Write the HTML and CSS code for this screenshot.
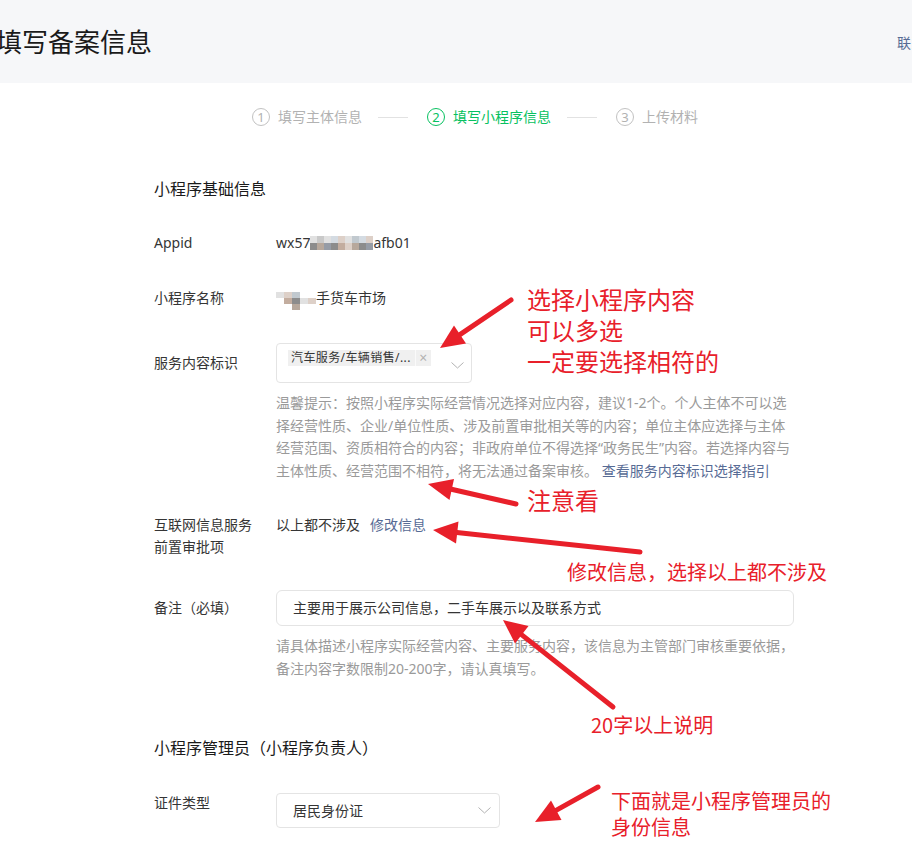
FILE: index.html
```html
<!DOCTYPE html>
<html lang="zh-CN">
  <head>
    <meta charset="UTF-8" />
    <title>填写备案信息</title>
    <link rel="stylesheet" href="styles.css">
  </head>
  <body>
    <div class="page">
      <header class="top">
        <h1 class="top-title">填写备案信息</h1>
        <a class="top-link">联系我们</a>
      </header>

      <div class="steps">
        <div class="step"><span class="step-num">1</span><span>填写主体信息</span></div>
        <span class="step-line"></span>
        <div class="step step-active"><span class="step-num">2</span><span>填写小程序信息</span></div>
        <span class="step-line"></span>
        <div class="step"><span class="step-num">3</span><span>上传材料</span></div>
      </div>

      <div class="form">
        <h2 class="section-title">小程序基础信息</h2>

        <div class="row row-appid">
          <div class="label">Appid</div>
          <div class="value">wx57<span class="mosaic mosaic-id">
            <i class="c1"></i><i class="c2"></i><i class="c1"></i><i class="c4"></i><i class="c5"></i><i class="c1"></i><i class="c6"></i><i class="c4"></i><i class="c5"></i>
            <i class="c3"></i><i class="c7"></i><i class="c8"></i><i class="c3"></i><i class="c9"></i><i class="c5"></i><i class="c7"></i><i class="c3"></i><i class="c8"></i>
          </span>afb01</div>
        </div>

        <div class="row row-name">
          <div class="label">小程序名称</div>
          <div class="value"><span class="mosaic mosaic-name">
            <i class="c1"></i><i class="c5"></i><i class="c6"></i><i class="c0"></i><i class="c0"></i>
            <i class="c0"></i><i class="c9"></i><i class="c3"></i><i class="c1"></i><i class="c5"></i>
            <i class="c0"></i><i class="c0"></i><i class="c7"></i><i class="c0"></i><i class="c0"></i>
          </span>手货车市场</div>
        </div>

        <div class="row row-center row-service">
          <div class="label">服务内容标识</div>
          <div class="multi-select">
            <span class="tag"><span class="tag-text">汽车服务/车辆销售/...</span><span class="tag-close">×</span></span>
            <svg class="chevron chevron-tag" width="13" height="7" viewBox="0 0 13 7"><polyline points="0.5,0.5 6.5,6 12.5,0.5" fill="none" stroke="#b2b2b2" stroke-width="1"/></svg>
          </div>
        </div>

        <p class="hint hint-service">温馨提示：按照小程序实际经营情况选择对应内容，建议1-2个。个人主体不可以选<br>择经营性质、企业/单位性质、涉及前置审批相关等的内容；单位主体应选择与主体<br>经营范围、资质相符合的内容；非政府单位不得选择“政务民生”内容。若选择内容与<br>主体性质、经营范围不相符，将无法通过备案审核。 <a class="link">查看服务内容标识选择指引</a></p>

        <div class="row row-icp">
          <div class="label">互联网信息服务前置审批项</div>
          <div class="value">以上都不涉及<a class="link link-edit">修改信息</a></div>
        </div>

        <div class="row row-center row-remark">
          <div class="label">备注（必填）</div>
          <div class="text-input">主要用于展示公司信息，二手车展示以及联系方式</div>
        </div>

        <p class="hint hint-remark">请具体描述小程序实际经营内容、主要服务内容，该信息为主管部门审核重要依据，<br>备注内容字数限制20-200字，请认真填写。</p>

        <h2 class="section-title section-admin">小程序管理员（小程序负责人）</h2>

        <div class="row row-idtype">
          <div class="label">证件类型</div>
          <div class="select">
            <span>居民身份证</span>
            <svg class="chevron" width="13" height="7" viewBox="0 0 13 7"><polyline points="0.5,0.5 6.5,6 12.5,0.5" fill="none" stroke="#b2b2b2" stroke-width="1"/></svg>
          </div>
        </div>
      </div>

      <!-- annotations drawn on top of the screenshot -->
      <div class="note note-select">选择小程序内容<br>可以多选<br>一定要选择相符的</div>
      <div class="note note-look">注意看</div>
      <div class="note note-small note-edit">修改信息，选择以上都不涉及</div>
      <div class="note note-small note-remark">20字以上说明</div>
      <div class="note note-small note-admin">下面就是小程序管理员的<br>身份信息</div>

      <svg class="arrows" width="912" height="842" viewBox="0 0 912 842">
        <g stroke="#e8202a" stroke-width="5" stroke-linecap="round" fill="none">
          <line x1="511" y1="300" x2="459.9" y2="334.6"/>
          <line x1="516" y1="504" x2="451.4" y2="489.3"/>
          <line x1="640" y1="552" x2="456.9" y2="532.5"/>
          <line x1="613" y1="707" x2="521.8" y2="634.9"/>
          <line x1="598" y1="787" x2="556" y2="810.4"/>
        </g>
        <g fill="#e8202a">
          <polygon points="440,348 466,343.5 454,325.5"/>
          <polygon points="428,484 454,479 449.5,500"/>
          <polygon points="433,530 458.5,521.5 456,543.5"/>
          <polygon points="503,620 528.5,626 515,643.5"/>
          <polygon points="535,822 561.5,820 551,800.5"/>
        </g>
      </svg>
    </div>
  </body>
</html>
```

FILE: styles.css
```css
body {
  margin: 0;
  font-family: "Noto Sans", "Noto Sans CJK SC", sans-serif;
  color: #353535;
  background-color: white;
  overflow: hidden;
}

.page {
  position: relative;
  width: 912px;
  height: 842px;
  overflow: hidden;
}

/* header */

.top {
  height: 83px;
  display: flex;
  align-items: center;
  justify-content: space-between;
  background-color: #f6f7f9;
}

.top-title {
  margin: 0 0 0 -4px;
  font-size: 26px;
  font-weight: normal;
  line-height: 34px;
  color: #1a1a1a;
}

.top-link {
  margin-right: -41px;
  font-size: 14px;
  color: #576b95;
}

/* steps */

.steps {
  display: flex;
  align-items: center;
  height: 20px;
  margin-top: 24px;
  padding-left: 252px;
  font-size: 14px;
  color: #b2b2b2;
}

.step {
  display: flex;
  align-items: center;
  line-height: 20px;
}

.step-num {
  width: 16px;
  height: 16px;
  margin-right: 8px;
  border: 1px solid #c2c2c2;
  border-radius: 50%;
  font-size: 13px;
  line-height: 16px;
  text-align: center;
}

.step-active {
  color: #07c160;
}

.step-active .step-num {
  border-color: #07c160;
}

.step-line {
  width: 30px;
  height: 1px;
  margin: 0 19px 0 16px;
  background-color: #e2e2e2;
}

/* form */

.form {
  padding-left: 154px;
  font-size: 14px;
}

.section-title {
  margin: 50px 0 0 0;
  font-size: 16px;
  font-weight: normal;
  line-height: 24px;
  color: #1a1a1a;
}

.section-admin {
  margin-top: 56px;
}

.row {
  display: flex;
  align-items: flex-start;
  line-height: 22px;
}

.row-center {
  align-items: center;
}

.label {
  width: 105px;
  padding-right: 17px;
  flex-shrink: 0;
}

.value {
  display: flex;
  align-items: center;
  height: 22px;
}

.row-icp .value {
  height: auto;
}

.row-appid {
  margin-top: 31px;
}

.row-name {
  margin-top: 33px;
}

.row-service {
  margin-top: 34px;
}

.row-icp {
  margin-top: 32px;
}

.row-remark {
  margin-top: 32px;
}

.row-idtype {
  margin-top: 32px;
}

.mosaic {
  display: inline-grid;
  grid-template-columns: repeat(9, 7px);
  grid-auto-rows: 7px;
}

.mosaic-name {
  grid-template-columns: repeat(5, 8px);
  grid-auto-rows: 6px;
  margin-top: 5px;
}

.mosaic i {
  display: block;
}

.c0 { background-color: transparent; }
.c1 { background-color: #e1e1e1; }
.c2 { background-color: #c9c9c9; }
.c3 { background-color: #8c8c8c; }
.c4 { background-color: #d4dbe2; }
.c5 { background-color: #ddd0c8; }
.c6 { background-color: #c1c9cf; }
.c7 { background-color: #b7a89c; }
.c8 { background-color: #969ca6; }
.c9 { background-color: #c3ad9f; }

.multi-select {
  width: 176px;
  height: 32px;
  display: flex;
  justify-content: space-between;
  align-items: flex-start;
  padding: 6px 7px 0 11px;
  border: 1px solid #e4e4e4;
  border-radius: 4px;
}

.tag {
  display: flex;
  height: 16px;
  background-color: #f0f0f0;
  font-size: 12px;
  line-height: 16px;
}

.tag-text {
  padding: 0 4px 0 3px;
  letter-spacing: 0.4px;
}

.tag-close {
  width: 15px;
  border-left: 1px solid #fafafa;
  color: #b2b2b2;
  font-size: 14px;
  text-align: center;
}

.chevron-tag {
  margin-top: 12px;
}

.hint {
  margin: 9px 0 0 122px;
  font-size: 14px;
  line-height: 22.5px;
  color: #9a9a9a;
  white-space: nowrap;
}

.hint-remark {
  margin-top: 8px;
  line-height: 23px;
}

.link {
  color: #576b95;
}

.link-edit {
  margin-left: 10px;
}

.text-input {
  width: 500px;
  height: 34px;
  padding-left: 16px;
  border: 1px solid #e4e4e4;
  border-radius: 6px;
  line-height: 34px;
}

.select {
  width: 198px;
  height: 33px;
  margin-top: 1px;
  display: flex;
  align-items: center;
  justify-content: space-between;
  padding: 0 8px 0 16px;
  border: 1px solid #e4e4e4;
  border-radius: 4px;
}

/* red notes over the page */

.note {
  position: absolute;
  font-family: "Noto Sans CJK SC", sans-serif;
  font-size: 24px;
  line-height: 31px;
  color: #e8202a;
  white-space: nowrap;
}

.note-small {
  font-size: 20px;
  line-height: 26px;
}

.note-select {
  left: 527px;
  top: 283px;
}

.note-look {
  left: 527px;
  top: 484px;
}

.note-edit {
  left: 567px;
  top: 559px;
}

.note-remark {
  left: 591px;
  top: 712px;
}

.note-admin {
  left: 611px;
  top: 788px;
}

.arrows {
  position: absolute;
  left: 0;
  top: 0;
  pointer-events: none;
}
```
